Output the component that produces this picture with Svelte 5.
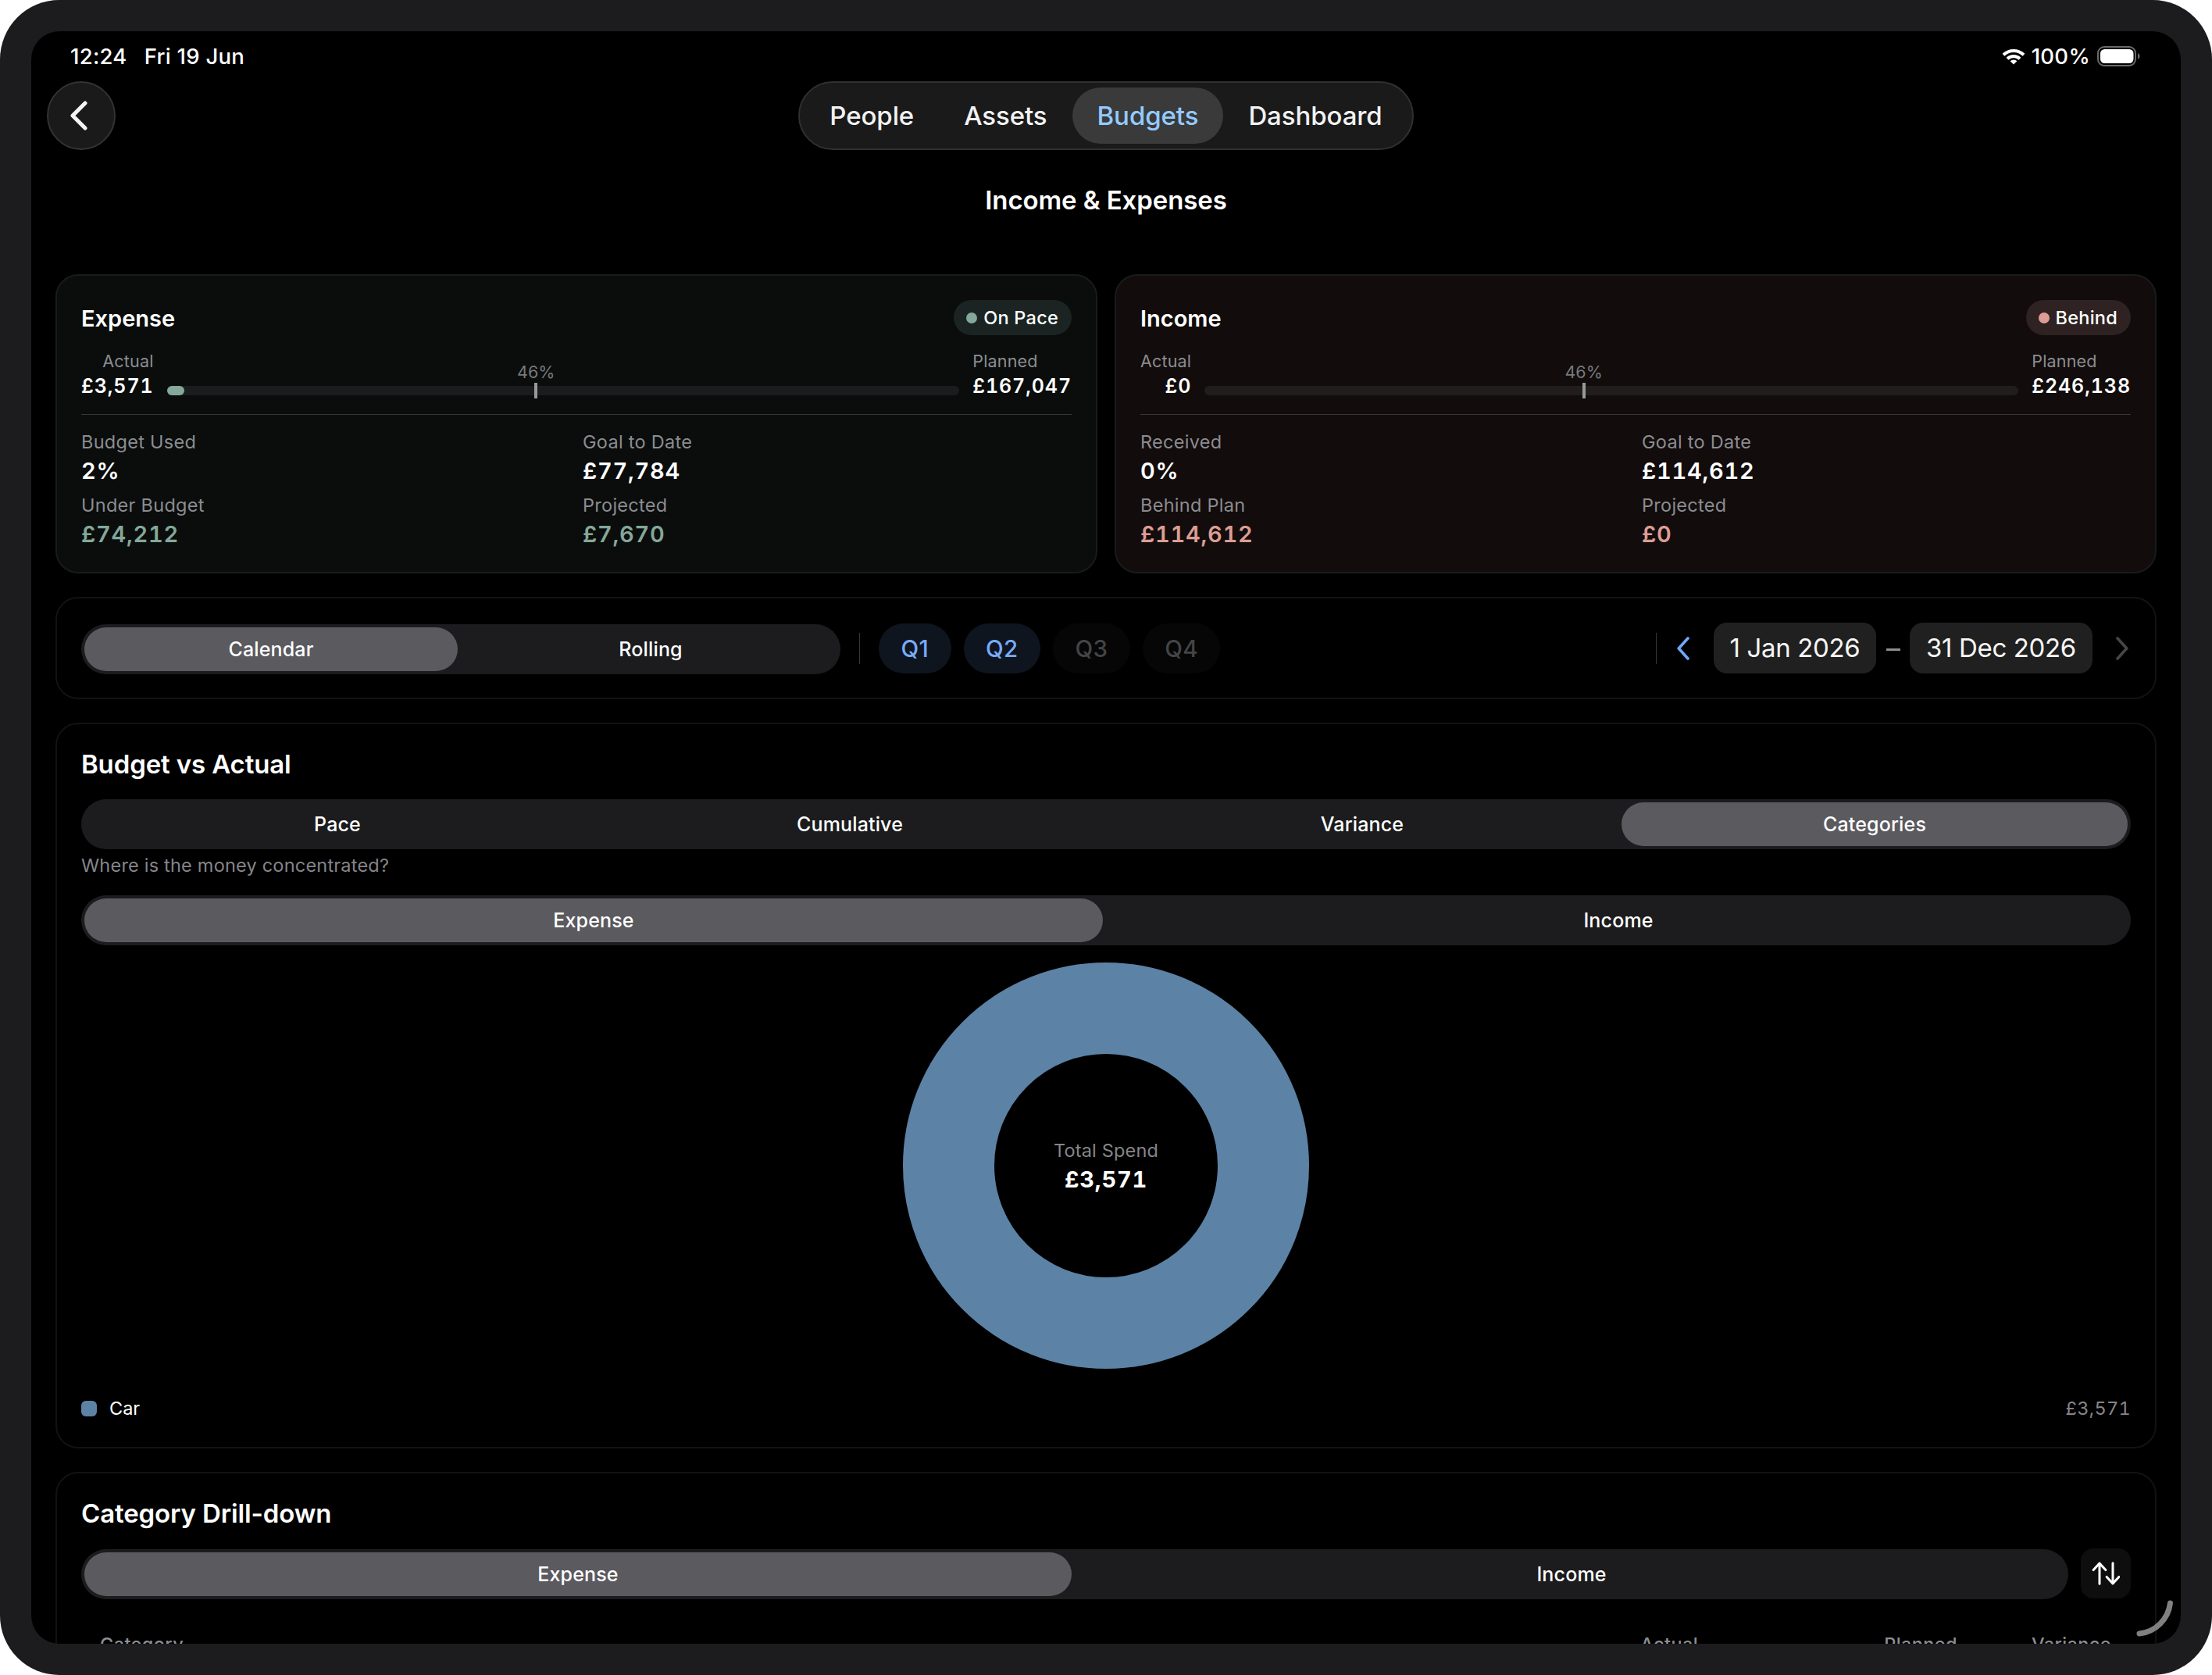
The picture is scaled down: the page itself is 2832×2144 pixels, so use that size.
<script lang="ts">
  type Tone = 'good' | 'bad';

  interface Summary {
    title: string;
    status: string;
    tone: Tone;
    actual: string;
    planned: string;
    progress: number;
    stats: { label: string; value: string; toned?: boolean }[];
  }

  const tabs = ['People', 'Assets', 'Budgets', 'Dashboard'];
  const activeTab = 'Budgets';

  // share of the year that has elapsed
  const elapsed = 46.58;

  const summaries: Summary[] = [
    {
      title: 'Expense',
      status: 'On Pace',
      tone: 'good',
      actual: '£3,571',
      planned: '£167,047',
      progress: 2.2,
      stats: [
        { label: 'Budget Used', value: '2%' },
        { label: 'Goal to Date', value: '£77,784' },
        { label: 'Under Budget', value: '£74,212', toned: true },
        { label: 'Projected', value: '£7,670', toned: true }
      ]
    },
    {
      title: 'Income',
      status: 'Behind',
      tone: 'bad',
      actual: '£0',
      planned: '£246,138',
      progress: 0,
      stats: [
        { label: 'Received', value: '0%' },
        { label: 'Goal to Date', value: '£114,612' },
        { label: 'Behind Plan', value: '£114,612', toned: true },
        { label: 'Projected', value: '£0', toned: true }
      ]
    }
  ];

  const quarters = [
    { label: 'Q1', active: true },
    { label: 'Q2', active: true },
    { label: 'Q3', active: false },
    { label: 'Q4', active: false }
  ];
</script>

{#snippet segmented(items: string[], selected: string)}
  <div class="segmented">
    {#each items as item}
      <button class="segmented__item" class:segmented__item--selected={item === selected}>{item}</button>
    {/each}
  </div>
{/snippet}

<div class="device">
  <div class="screen">
    <header class="status-bar">
      <span class="status-bar__time">12:24</span>
      <span class="status-bar__date">Fri 19 Jun</span>
      <div class="status-bar__right">
        <svg class="wifi" viewBox="0 0 30 21" aria-hidden="true">
          <path d="M2 8.2a18.6 18.6 0 0 1 26 0" />
          <path d="M7 13.2a11.6 11.6 0 0 1 16 0" />
          <path class="wifi__dot" d="M15 20.6l-4.4-4.4a6.4 6.4 0 0 1 8.8 0z" />
        </svg>
        <span class="status-bar__percent">100%</span>
        <svg class="battery" viewBox="0 0 56 26" aria-hidden="true">
          <rect class="battery__case" x="1" y="1" width="48" height="24" rx="8" />
          <rect class="battery__level" x="4" y="4" width="42.5" height="18" rx="5.5" />
          <path class="battery__cap" d="M52 9a4.4 4.4 0 0 1 0 8z" />
        </svg>
      </div>
    </header>

    <nav class="nav">
      <button class="nav__back" aria-label="Back">
        <svg viewBox="0 0 22 38" aria-hidden="true"><path d="M19 3L3 19l16 16" /></svg>
      </button>
      <div class="tabs">
        {#each tabs as tab}
          <button class="tabs__item" class:tabs__item--active={tab === activeTab}>{tab}</button>
        {/each}
      </div>
    </nav>

    <h1 class="page-title">Income &amp; Expenses</h1>

    <main class="content">
      <section class="summaries">
        {#each summaries as s}
          <article class="card summary summary--{s.tone}">
            <div class="summary__header">
              <h2>{s.title}</h2>
              <span class="badge"><i class="badge__dot"></i>{s.status}</span>
            </div>

            <div class="meter">
              <div class="meter__side meter__side--actual">
                <span class="meter__label">Actual</span>
                <span class="meter__value">{s.actual}</span>
              </div>
              <div class="meter__track">
                {#if s.progress > 0}
                  <div class="meter__fill" style="width: {s.progress}%"></div>
                {/if}
                <div class="meter__marker" style="left: {elapsed}%">
                  <span>46%</span>
                </div>
              </div>
              <div class="meter__side">
                <span class="meter__label">Planned</span>
                <span class="meter__value">{s.planned}</span>
              </div>
            </div>

            <dl class="stats">
              {#each s.stats as stat}
                <div>
                  <dt>{stat.label}</dt>
                  <dd class:toned={stat.toned}>{stat.value}</dd>
                </div>
              {/each}
            </dl>
          </article>
        {/each}
      </section>

      <section class="card filters">
        <div class="filters__mode">{@render segmented(['Calendar', 'Rolling'], 'Calendar')}</div>
        <i class="rule"></i>
        <div class="quarters">
          {#each quarters as q}
            <button class="quarter" class:quarter--active={q.active}>{q.label}</button>
          {/each}
        </div>
        <div class="range">
          <i class="rule"></i>
          <svg class="range__arrow" viewBox="0 0 16 30" aria-hidden="true"><path d="M14 2L2.2 15 14 28" /></svg>
          <button class="date date--from">1 Jan 2026</button>
          <span class="range__dash"></span>
          <button class="date date--to">31 Dec 2026</button>
          <svg class="range__arrow range__arrow--off" viewBox="0 0 16 30" aria-hidden="true"><path d="M2 2l11.8 13L2 28" /></svg>
        </div>
      </section>

      <section class="card panel">
        <h2 class="panel__title">Budget vs Actual</h2>
        {@render segmented(['Pace', 'Cumulative', 'Variance', 'Categories'], 'Categories')}
        <p class="panel__hint">Where is the money concentrated?</p>
        {@render segmented(['Expense', 'Income'], 'Expense')}
        <div class="donut">
          <span class="donut__label">Total Spend</span>
          <span class="donut__value">£3,571</span>
        </div>
        <div class="legend">
          <i class="legend__swatch"></i>
          <span>Car</span>
          <span class="legend__value">£3,571</span>
        </div>
      </section>

      <section class="card panel panel--last">
        <h2 class="panel__title">Category Drill-down</h2>
        <div class="drill">
          {@render segmented(['Expense', 'Income'], 'Expense')}
          <button class="sort" aria-label="Sort">
            <svg viewBox="0 0 36 30" aria-hidden="true">
              <path d="M10 28.2V2M2.2 10.6L10 2l7.8 8.6" />
              <path d="M27 1.8V28M19.2 19.4L27 28l7.8-8.6" />
            </svg>
          </button>
        </div>
        <div class="table-head">
          <span>Category</span>
          <span>Actual</span>
          <span>Planned</span>
          <span>Variance</span>
        </div>
      </section>
    </main>

    <svg class="resize-handle" viewBox="0 0 54 54" aria-hidden="true">
      <path d="M46.5 7A44.5 44.5 0 0 1 7 46" />
    </svg>
  </div>
</div>

<style>
  :global(body) {
    margin: 0;
    background: #fff;
  }

  .device {
    box-sizing: border-box;
    width: 2832px;
    height: 2144px;
    padding: 40px;
    border-radius: 76px;
    background: #1c1c1e;
    font-family: Inter, 'Liberation Sans', sans-serif;
    color: #fff;
  }

  .screen {
    position: relative;
    height: 2064px;
    border-radius: 36px;
    background: #000;
    overflow: hidden;
  }

  button {
    border: 0;
    margin: 0;
    padding: 0;
    background: none;
    color: inherit;
    font: inherit;
  }

  h1,
  h2,
  p,
  dl,
  dd {
    margin: 0;
  }

  svg {
    display: block;
    fill: none;
    stroke-linecap: round;
    stroke-linejoin: round;
  }

  /* Status bar */
  .status-bar {
    display: flex;
    align-items: center;
    height: 64px;
    padding: 0 51px 0 50px;
    font-size: 27.5px;
    font-weight: 500;
    line-height: 64px;
    letter-spacing: 0.28px;
  }

  .status-bar__date {
    margin-left: 22px;
  }

  .status-bar__right {
    display: flex;
    align-items: center;
    margin-left: auto;
  }

  .wifi {
    width: 30px;
    height: 21px;
    stroke: #fff;
    stroke-width: 4;
    stroke-linecap: butt;
  }

  .wifi__dot {
    fill: #fff;
    stroke: none;
  }

  .status-bar__percent {
    margin: 0 9px 0 8px;
  }

  .battery {
    width: 56px;
    height: 26px;
  }

  .battery__case {
    stroke: #6a6a6a;
    stroke-width: 2;
  }

  .battery__level {
    fill: #fff;
  }

  .battery__cap {
    fill: #6a6a6a;
  }

  /* Navigation */
  .nav {
    display: grid;
    grid-template-columns: 1fr auto 1fr;
    height: 88px;
    padding: 0 20px;
  }

  .nav__back {
    box-sizing: border-box;
    display: flex;
    align-items: center;
    width: 88px;
    height: 88px;
    padding-left: 28px;
    border: 2px solid #333;
    border-radius: 50%;
    background: #1a1a1a;
  }

  .nav__back svg {
    width: 22px;
    height: 38px;
    stroke: #f4f4f4;
    stroke-width: 5;
  }

  .tabs {
    box-sizing: border-box;
    display: flex;
    height: 88px;
    padding: 6px;
    border: 2px solid #303030;
    border-radius: 44px;
    background: #1a1a1a;
  }

  .tabs__item {
    padding: 0 32px;
    border-radius: 36px;
    font-size: 33px;
    font-weight: 500;
    letter-spacing: -0.09px;
    color: #f2f2f2;
  }

  .tabs__item--active {
    background: #3a3a3a;
    color: #93cbff;
  }

  .page-title {
    height: 128px;
    font-size: 33px;
    font-weight: 600;
    line-height: 128px;
    letter-spacing: -0.1px;
    text-align: center;
  }

  .content {
    display: flex;
    flex-direction: column;
    gap: 30px;
    padding: 31px 31px 0;
  }

  .card {
    box-sizing: border-box;
    padding: 31px;
    border: 2px solid #121213;
    border-radius: 29px;
  }

  /* Summary cards */
  .summaries {
    display: grid;
    grid-template-columns: 1fr 1fr;
    gap: 22px;
  }

  .summary {
    height: 383px;
    border-color: #191b1b;
  }

  .summary--good {
    --tone: #84a899;
    --badge: #1b2422;
    --track: #1a1d1e;
    background: #0a0d0c;
  }

  .summary--bad {
    --tone: #dd9d94;
    --badge: #2f2222;
    --track: #211d1d;
    background: #120c0c;
  }

  .summary__header {
    display: flex;
    justify-content: space-between;
    height: 45px;
  }

  .summary__header h2 {
    font-size: 29px;
    font-weight: 600;
    line-height: 48px;
  }

  .badge {
    display: flex;
    align-items: center;
    padding: 0 17px 0 16px;
    border-radius: 23px;
    background: var(--badge);
    font-size: 23.5px;
    font-weight: 500;
    letter-spacing: 0.25px;
  }

  .badge__dot {
    width: 14px;
    height: 14px;
    margin-right: 8px;
    border-radius: 50%;
    background: var(--tone);
  }

  .meter {
    display: flex;
    align-items: flex-end;
    gap: 17px;
    height: 63px;
    margin-top: 18px;
    padding-bottom: 20px;
    border-bottom: 1px solid #363838;
  }

  .meter__side {
    display: flex;
    flex-direction: column;
  }

  .meter__side--actual {
    align-items: flex-end;
  }

  .meter__label {
    font-size: 21.5px;
    line-height: 31px;
    letter-spacing: 0.18px;
    color: #8c8c91;
  }

  .meter__value {
    font-size: 25px;
    font-weight: 600;
    line-height: 32px;
    letter-spacing: 0.9px;
    font-feature-settings: 'tnum';
  }

  .meter__track {
    position: relative;
    flex: 1;
    height: 12px;
    margin-bottom: 4px;
    border-radius: 6px;
    background: var(--track);
  }

  .meter__fill {
    height: 12px;
    border-radius: 6px;
    background: var(--tone);
  }

  .meter__marker {
    position: absolute;
    top: -4px;
    width: 4px;
    height: 20px;
    margin-left: -2px;
    background: #989a9a;
  }

  .meter__marker span {
    position: absolute;
    bottom: 18px;
    left: 50%;
    transform: translateX(-50%);
    font-size: 21.5px;
    line-height: 31px;
    color: #77797b;
  }

  .stats {
    display: grid;
    grid-template-columns: 1fr 1fr;
    gap: 7px 16px;
    margin-top: 17px;
  }

  .stats dt {
    font-size: 23.5px;
    line-height: 35px;
    letter-spacing: 0.28px;
    color: #8c8c91;
  }

  .stats dd {
    font-size: 29px;
    font-weight: 600;
    line-height: 39px;
    letter-spacing: 0.72px;
    font-feature-settings: 'tnum';
  }

  .stats .toned {
    color: var(--tone);
  }

  /* Segmented control */
  .segmented {
    display: flex;
    width: 100%;
    height: 64px;
    border-radius: 32px;
    background: #1c1c1e;
  }

  .segmented__item {
    flex: 1;
    margin: 4px;
    border-radius: 28px;
    font-size: 25px;
    font-weight: 500;
    letter-spacing: 0.15px;
  }

  .segmented__item--selected {
    background: #5b5a5f;
  }

  /* Filters */
  .filters {
    display: flex;
    align-items: center;
    height: 131px;
  }

  .filters__mode {
    width: 972px;
    padding-top: 3px;
  }

  .rule {
    width: 1px;
    height: 40px;
    background: #38383a;
  }

  .filters > .rule {
    margin: 0 24px;
  }

  .quarters {
    display: flex;
    gap: 16px;
    padding-top: 1px;
  }

  .quarter {
    height: 64px;
    padding: 0 28.5px;
    border-radius: 32px;
    background: #060606;
    font-size: 29.5px;
    font-weight: 500;
    letter-spacing: 0.3px;
    color: #444446;
  }

  .quarter--active {
    background: #0e151f;
    color: #78abf9;
  }

  .range {
    display: flex;
    align-items: center;
    margin-left: auto;
  }

  .range__arrow {
    width: 16px;
    height: 30px;
    margin: 0 31px 0 26px;
    stroke: #6fa8fb;
    stroke-width: 3.6;
  }

  .range__arrow--off {
    margin: 0 3px 0 30px;
    stroke: #464648;
  }

  .date {
    height: 65px;
    padding-bottom: 1px;
    border-radius: 17px;
    background: #202020;
    font-size: 33px;
    letter-spacing: -0.35px;
    color: #f6f6f6;
  }

  .date--from {
    width: 208px;
  }

  .date--to {
    width: 234px;
  }

  .range__dash {
    width: 18px;
    height: 3px;
    margin: 4px 12px 0 13px;
    background: #8e8e93;
  }

  /* Panels */
  .panel {
    height: 929px;
  }

  .panel__title {
    margin-bottom: 25px;
    font-size: 33px;
    font-weight: 600;
    line-height: 40px;
    letter-spacing: -0.13px;
  }

  .panel__hint {
    margin: 4px 0 22px;
    font-size: 23.5px;
    line-height: 33px;
    letter-spacing: 0.21px;
    color: #85858a;
  }

  .donut {
    box-sizing: border-box;
    display: flex;
    flex-direction: column;
    align-items: center;
    justify-content: center;
    width: 520px;
    height: 520px;
    margin: 22px auto 34px;
    padding-top: 2px;
    border: 117px solid #5c82a6;
    border-radius: 50%;
  }

  .donut__label {
    font-size: 23.5px;
    line-height: 34px;
    letter-spacing: 0.18px;
    color: #85858a;
  }

  .donut__value {
    font-size: 29px;
    font-weight: 700;
    line-height: 40px;
    letter-spacing: 0.8px;
    font-feature-settings: 'tnum';
  }

  .legend {
    display: flex;
    align-items: center;
    font-size: 23.5px;
    line-height: 34px;
  }

  .legend__swatch {
    width: 20px;
    height: 20px;
    margin-right: 16px;
    border-radius: 6px;
    background: #5c82a6;
  }

  .legend__value {
    margin-left: auto;
    letter-spacing: 0.3px;
    color: #85858a;
    font-feature-settings: 'tnum';
  }

  .drill {
    display: flex;
    gap: 16px;
    height: 65px;
  }

  .drill .segmented {
    margin-top: 1px;
  }

  .sort {
    display: flex;
    flex: none;
    align-items: center;
    justify-content: center;
    width: 64px;
    height: 64px;
    border-radius: 16px;
    background: #0e0e0e;
  }

  .sort svg {
    width: 36px;
    height: 30px;
    stroke: #fff;
    stroke-width: 3;
  }

  .table-head {
    display: grid;
    grid-template-columns: 1fr 332px 332px 197px;
    margin-top: 41px;
    padding: 0 25px 0 24px;
    font-size: 23.5px;
    font-weight: 500;
    line-height: 34px;
    letter-spacing: 0.4px;
    color: #8e8e93;
    text-align: right;
  }

  .table-head span:first-child {
    text-align: left;
  }

  .resize-handle {
    position: absolute;
    right: 6px;
    bottom: 5px;
    width: 54px;
    height: 54px;
    stroke: #808080;
    stroke-width: 7;
  }
</style>
